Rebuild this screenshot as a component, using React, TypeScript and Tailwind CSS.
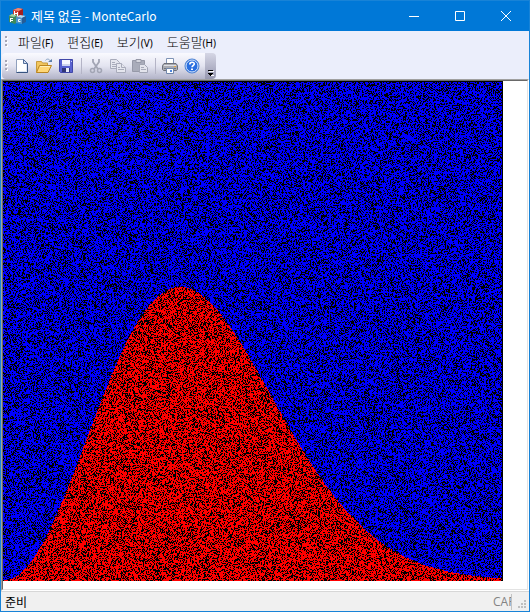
import { useEffect, useRef, type ReactNode } from 'react';

const PLOT_SIZE = 500;
const SAMPLES = 250000;

const menus = [
  { label: '파일', key: '(F)' },
  { label: '편집', key: '(E)' },
  { label: '보기', key: '(V)' },
  { label: '도움말', key: '(H)' },
];

// Maxwell distribution, x in 0..4
function maxwell(x: number) {
  return Math.sqrt(2 / Math.PI) * x * x * Math.exp((-x * x) / 2);
}

function createRandom(seed: number) {
  let state = seed;
  return () => {
    state = (state + 0x6d2b79f5) | 0;
    let t = Math.imul(state ^ (state >>> 15), 1 | state);
    t = (t + Math.imul(t ^ (t >>> 7), 61 | t)) ^ t;
    return ((t ^ (t >>> 14)) >>> 0) / 4294967296;
  };
}

function MonteCarloPlot() {
  const ref = useRef<HTMLCanvasElement>(null);

  useEffect(() => {
    const ctx = ref.current?.getContext('2d');
    if (!ctx) return;

    const random = createRandom(1234);
    const image = ctx.createImageData(PLOT_SIZE, PLOT_SIZE);
    for (let i = 3; i < image.data.length; i += 4) image.data[i] = 255;

    for (let n = 0; n < SAMPLES; n++) {
      const px = Math.floor(random() * (PLOT_SIZE - 1));
      const py = Math.floor(random() * (PLOT_SIZE - 1));
      const hit = py / PLOT_SIZE < maxwell((4 * px) / PLOT_SIZE);
      const offset = ((PLOT_SIZE - 1 - py) * PLOT_SIZE + px) * 4;
      image.data[offset + (hit ? 0 : 2)] = 255;
    }
    ctx.putImageData(image, 0, 0);
  }, []);

  return (
    <canvas
      ref={ref}
      width={PLOT_SIZE}
      height={PLOT_SIZE}
      role="img"
      aria-label="MonteCarlo"
      className="block shrink-0"
    />
  );
}

function AppIcon() {
  return (
    <svg width="17" height="16" viewBox="0 0 17 16" className="shrink-0">
      <path d="M4 2l5-2 5 1v7l-4 2-6-1z" fill="#d0392f" />
      <path d="M4 2l5-2 5 1-4 2z" fill="#ef8a76" />
      <path d="M10 3l4-2v7l-4 2z" fill="#a32020" />
      <path d="M0 8l3-2 5 1v7l-2 2-6-2z" fill="#3f8a5c" />
      <path d="M0 8l3-2 5 1-3 2z" fill="#9fd0a4" />
      <path d="M7 9l4-2 6 1-4 2z" fill="#b4dcf3" />
      <path d="M7 9l6 1v6l-6-1z" fill="#4c93cb" />
      <path d="M13 10l4-2v6l-4 2z" fill="#245c96" />
      <path d="M5.500 3v4M8.500 4v4M6 5.500h2M1.500 10v4M2 10.500h2M2 12.500h2M11.500 11.500h-2v2h2" stroke="#fff" fill="none" />
    </svg>
  );
}

function NewIcon() {
  return (
    <svg width="16" height="16" viewBox="0 0 16 16">
      <path d="M2.500 1.500h7l4 4v9h-11z" fill="#fff" stroke="#8fa0bd" />
      <path d="M13.500 5.500v9h-11" fill="none" stroke="#37537f" />
      <path d="M9.500 1.500v4h4z" fill="#d4def0" stroke="#54709c" />
      <path d="M12.500 6v7.500H4" stroke="#dce5f4" fill="none" />
    </svg>
  );
}

function OpenIcon() {
  return (
    <svg width="16" height="16" viewBox="0 0 16 16">
      <path d="M.5 14.500v-11h5l1 1.500h5v3" fill="#f2c65e" stroke="#c69a3c" />
      <path d="M.5 14.500l3-7h12l-3.500 7z" fill="#ffd777" stroke="#b98420" />
      <path d="M4 8.500h10" stroke="#fff0b8" />
      <path d="M9.500 2.500c1-2 4-2 5 1" fill="none" stroke="#8ba5c6" />
      <path d="M12 4h4V1z" fill="#5d80ab" />
    </svg>
  );
}

function SaveIcon() {
  return (
    <svg width="16" height="16" viewBox="0 0 16 16">
      <path d="M1.500 1.500h13v13h-12l-1-1z" fill="#5962d0" stroke="#4047a8" />
      <path d="M4 2h8v6H4z" fill="#f7f8ff" />
      <path d="M4 6h8v2H4z" fill="#cdd4ee" />
      <path d="M4 10h8v4H4z" fill="#303677" />
      <path d="M8 10h3v4H8z" fill="#e8ebf8" />
      <path d="M13 3h1v1h-1z" fill="#c9cff4" />
    </svg>
  );
}

function CutIcon() {
  return (
    <svg width="16" height="16" viewBox="0 0 16 16" fill="none" stroke="#a2a5b4">
      <path d="M5 1v3l5 7M11 1v3l-5 7" strokeWidth="1.800" />
      <circle cx="4.500" cy="12.500" r="2" strokeWidth="1.500" />
      <circle cx="11.500" cy="12.500" r="2" strokeWidth="1.500" />
    </svg>
  );
}

function CopyIcon() {
  return (
    <svg width="16" height="16" viewBox="0 0 16 16" fill="#e5e6ee" stroke="#a8abba">
      <path d="M.5 1.500h6l3 3v6h-9z" />
      <path d="M2 4.500h3M2 6.500h4M2 8.500h4" />
      <path d="M6.500 5.500h5l4 4v5h-9z" />
      <path d="M11.500 5.500v4h4M8 9.500h2M8 11.500h6" />
    </svg>
  );
}

function PasteIcon() {
  return (
    <svg width="16" height="16" viewBox="0 0 16 16">
      <path d="M.5 2.500h12v11H.5z" fill="#a9acba" stroke="#9699a8" />
      <path d="M4 1.500h5v3H4z" fill="#d5d6df" stroke="#9699a8" />
      <path d="M7.500 6.500h5l3 3v5h-8z" fill="#e3e4ec" stroke="#a1a4b3" />
      <path d="M9 9.500h3M9 11.500h5" stroke="#a8abba" />
    </svg>
  );
}

function PrintIcon() {
  return (
    <svg width="16" height="16" viewBox="0 0 16 16">
      <path d="M4.500 6V.5h7V6" fill="#fff" stroke="#7f93b5" />
      <path d="M2 5.500h12l1.500 2v4l-1 1h-13l-1-1v-4z" fill="#a9abb2" stroke="#6c6f78" />
      <path d="M2 7.500h12" stroke="#dfe0e4" />
      <path d="M2 10.500h12" stroke="#72757f" />
      <path d="M12 8h2v1h-2z" fill="#e5a33c" />
      <path d="M4.500 10.500h7v5h-7z" fill="#fff" stroke="#7187ab" />
      <path d="M8 12h2v2H8z" fill="#4f86dc" />
    </svg>
  );
}

function HelpIcon() {
  return (
    <svg width="16" height="16" viewBox="0 0 16 16">
      <circle cx="8" cy="8" r="7" fill="#2a6fe0" stroke="#4a7fd0" />
      <circle cx="8" cy="8" r="6" fill="none" stroke="#d8e7fb" />
      <path d="M5.800 6.500c0-3 4.500-3 4.500-.5 0 1.500-2.300 1.500-2.300 3.300" fill="none" stroke="#fff" strokeWidth="1.600" />
      <path d="M7 10.500h2V12H7z" fill="#fff" />
    </svg>
  );
}

function Gripper() {
  return (
    <svg width="4" height="12" viewBox="0 0 4 12" className="shrink-0">
      <path d="M1 1h2v2H1zM1 5h2v2H1zM1 9h2v2H1z" fill="#fff" />
      <path d="M0 0h2v2H0zM0 4h2v2H0zM0 8h2v2H0z" fill="#a5a5b5" />
    </svg>
  );
}

function ToolButton({ label, disabled, children }: { label: string; disabled?: boolean; children: ReactNode }) {
  return (
    <button aria-label={label} disabled={disabled} className="flex h-6 w-[22px] items-center justify-center">
      {children}
    </button>
  );
}

function Separator() {
  return <div className="mr-[3px] ml-1 h-4 w-px bg-[#b4b4c6]" />;
}

function TitleBar() {
  return (
    <header className="flex h-[30px] items-center bg-[#0078d7] pl-2 text-white">
      <AppIcon />
      <h1 className="ml-[5px] flex-1 text-[13px] leading-4 font-normal">
        제목 없음 <span className="text-xs">- MonteCarlo</span>
      </h1>
      <button aria-label="최소화" className="flex h-full w-[46px] items-center justify-center">
        <svg width="10" height="10" stroke="#fff">
          <path d="M0 5.500h10" />
        </svg>
      </button>
      <button aria-label="최대화" className="flex h-full w-[46px] items-center justify-center">
        <svg width="10" height="10" stroke="#fff" fill="none">
          <path d="M.5.5h9v9h-9z" />
        </svg>
      </button>
      <button aria-label="닫기" className="flex h-full w-[46px] items-center justify-center">
        <svg width="10" height="10" stroke="#fff">
          <path d="M0 0l10 10M10 0L0 10" />
        </svg>
      </button>
    </header>
  );
}

export default function App() {
  return (
    <div className="flex min-h-screen flex-col border border-[#1883d7] bg-[#ebeefb] font-['Noto_Sans_CJK_KR',sans-serif] text-black">
      <TitleBar />

      <nav className="flex h-[22px] items-center pl-1">
        <Gripper />
        <div className="ml-0.5 flex">
          {menus.map((menu) => (
            <button key={menu.label} className="flex items-baseline px-[7px] text-[13px] leading-5">
              <span className="font-light">{menu.label}</span>
              <span className="font-['Noto_Sans',sans-serif] text-[10px]">{menu.key}</span>
            </button>
          ))}
        </div>
      </nav>

      <div className="flex h-[26px] pl-px">
        <div className="flex items-center rounded-l-sm bg-linear-to-b from-[#fafaff] via-[#e3e4f0] to-[#b2b3c8] pr-0.5 pl-[3px]">
          <Gripper />
          <div className="flex items-center pl-0.5">
            <ToolButton label="새로 만들기"><NewIcon /></ToolButton>
            <ToolButton label="열기"><OpenIcon /></ToolButton>
            <ToolButton label="저장"><SaveIcon /></ToolButton>
            <Separator />
            <ToolButton label="잘라내기" disabled><CutIcon /></ToolButton>
            <ToolButton label="복사" disabled><CopyIcon /></ToolButton>
            <ToolButton label="붙여넣기" disabled><PasteIcon /></ToolButton>
            <Separator />
            <ToolButton label="인쇄"><PrintIcon /></ToolButton>
            <ToolButton label="도움말"><HelpIcon /></ToolButton>
          </div>
        </div>
        <button
          aria-label="도구 모음 옵션"
          className="flex w-[11px] items-end justify-center rounded-r-sm bg-linear-to-b from-[#d5d6e5] to-[#9798b0] pb-0.5"
        >
          <svg width="6" height="8" viewBox="0 0 6 8">
            <path d="M1 2.500h5M3 6.500h3" stroke="#fff" />
            <path d="M0 1h5v1H0zM0 4h5v1H4v1H3v1H2V6H1V5H0z" fill="#000" />
          </svg>
        </button>
      </div>

      <main className="flex flex-1 border border-t-[#a0a0a0] border-r-white border-b-white border-l-[#a0a0a0]">
        <div className="flex-1 overflow-hidden border border-t-[#696969] border-r-[#e3e3e3] border-b-[#e3e3e3] border-l-[#696969] bg-white">
          <MonteCarloPlot />
        </div>
      </main>

      <footer className="flex h-5 items-center border-t border-[#d7d7d7] bg-[#f0f0f0] pl-1 text-xs leading-4">
        <p className="flex-1">준비</p>
        <div className="flex h-4 w-[19px] items-center overflow-hidden border-r border-[#c3c3c3] font-['Open_Sans',sans-serif] text-xs text-[#838383]">
          CAP
        </div>
        <svg width="17" height="18" viewBox="0 0 17 18" fill="#bfbfbf">
          <path d="M12 7h2v2h-2zM9 10h2v2H9zM12 10h2v2h-2zM6 13h2v2H6zM9 13h2v2H9zM12 13h2v2h-2z" />
        </svg>
      </footer>
    </div>
  );
}
